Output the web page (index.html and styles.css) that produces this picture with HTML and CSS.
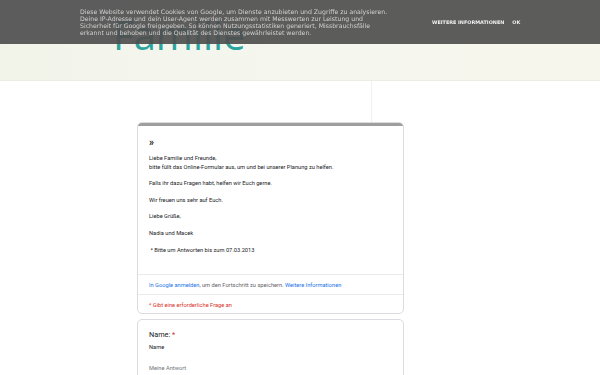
FILE: index.html
```html
<!DOCTYPE html>
<html lang="de">
<head>
  <meta charset="UTF-8" />
  <title>Familie</title>
  <link rel="stylesheet" href="styles.css">
</head>
<body>
  <div id="cookie-bar">
    <div class="cookie-text">
      Diese Website verwendet Cookies von Google, um Dienste anzubieten und Zugriffe zu analysieren.<br>
      Deine IP-Adresse und dein User-Agent werden zusammen mit Messwerten zur Leistung und<br>
      Sicherheit für Google freigegeben. So können Nutzungsstatistiken generiert, Missbrauchsfälle<br>
      erkannt und behoben und die Qualität des Dienstes gewährleistet werden.
    </div>
    <div class="cookie-buttons">
      <span>Weitere Informationen</span><span>OK</span>
    </div>
  </div>

  <div id="header">
    <h1 class="blog-title">Familie</h1>
  </div>

  <div id="content">
    <div class="card intro">
      <div class="card-top"></div>
      <div class="card-body">
        <div class="arrows">&raquo;</div>
        <p>Liebe Familie und Freunde,<br>bitte füllt das Online-Formular aus, um und bei unserer Planung zu helfen.</p>
        <p>Falls ihr dazu Fragen habt, helfen wir Euch gerne.</p>
        <p>Wir freuen uns sehr auf Euch.</p>
        <p>Liebe Grüße,</p>
        <p>Nadia und Macek</p>
        <p>&nbsp;* Bitte um Antworten bis zum 07.03.2013</p>
      </div>
      <div class="card-row signin">
        <a href="#">In Google anmelden</a>, um den Fortschritt zu speichern. <a href="#">Weitere Informationen</a>
      </div>
      <div class="card-row required">* Gibt eine erforderliche Frage an</div>
    </div>

    <div class="card question">
      <div class="q-title">Name: <span class="star">*</span></div>
      <div class="q-desc">Name</div>
      <div class="q-input">Meine Antwort</div>
    </div>
  </div>
</body>
</html>
```

FILE: styles.css
```css
body {
  margin: 0;
  background: #fff;
  font-family: Roboto, "Liberation Sans", sans-serif;
  overflow: hidden;
}

#cookie-bar {
  position: fixed;
  top: 0;
  left: 0;
  right: 0;
  height: 44px;
  background: rgba(78, 78, 78, 0.92);
  display: flex;
  align-items: center;
  z-index: 100;
}
.cookie-text {
  margin-left: 80px;
  width: 312px;
  white-space: nowrap;
  font-family: "DejaVu Sans", sans-serif;
  font-size: 6.2px;
  line-height: 7.2px;
  color: #d0d0d0;
}
.cookie-buttons {
  margin-left: 40px;
  display: flex;
  gap: 8px;
  font-family: "DejaVu Sans", sans-serif;
  font-size: 4.9px;
  font-weight: bold;
  text-transform: uppercase;
  color: #f2f2f2;
}

#header {
  height: 80px;
  background: linear-gradient(90deg, #f2f4ea, #f5f6ee 50%, #f6f6ec);
  border-bottom: 1px solid #ecece6;
  overflow: hidden;
}
.blog-title {
  margin: 0;
  padding: 15px 0 0 113px;
  font-family: "Open Sans", sans-serif;
  font-weight: normal;
  font-size: 40px;
  line-height: 40px;
  color: #2ba4a0;
}

#content {
  padding: 41px 0 0 137px;
  background: linear-gradient(90deg, transparent 371px, #f0f0f0 371px, #f0f0f0 372px, transparent 372px) no-repeat 0 0 / 100% 41px;
}

.card {
  box-sizing: border-box;
  width: 267px;
  background: #fff;
  border: 1px solid #dadce0;
  border-radius: 5px;
  margin-bottom: 5px;
  overflow: hidden;
}
.card-top {
  height: 4px;
  background: #9e9e9e;
  margin: -1px -1px 0;
}
.card-body {
  padding: 12px 11px 20px;
  font-size: 5.7px;
  color: #202124;
}
.arrows {
  font-size: 10px;
  font-weight: bold;
  line-height: 10px;
  margin-bottom: 6px;
}
.card-body p {
  margin: 0 0 8px;
  line-height: 8.6px;
}
.card-body p:last-child {
  margin-bottom: 0;
}
.card-row {
  border-top: 1px solid #e8eaed;
  padding: 6px 11px 5px;
  font-size: 5.7px;
  line-height: 8px;
  color: #5f6368;
}
.card-row a {
  color: #1a73e8;
  text-decoration: none;
}
.required {
  color: #d93025;
  padding-bottom: 4px;
}

.question {
  padding: 10px 11px 6px;
}
.q-title {
  font-size: 7.3px;
  color: #202124;
  line-height: 10px;
  margin-bottom: 3px;
}
.star {
  color: #d93025;
}
.q-desc {
  font-size: 5.7px;
  color: #202124;
  line-height: 8px;
  margin-bottom: 14px;
}
.q-input {
  width: 122px;
  font-size: 5.7px;
  color: #70757a;
  padding-bottom: 4px;
  border-bottom: 1px solid #e0e0e0;
}
```
